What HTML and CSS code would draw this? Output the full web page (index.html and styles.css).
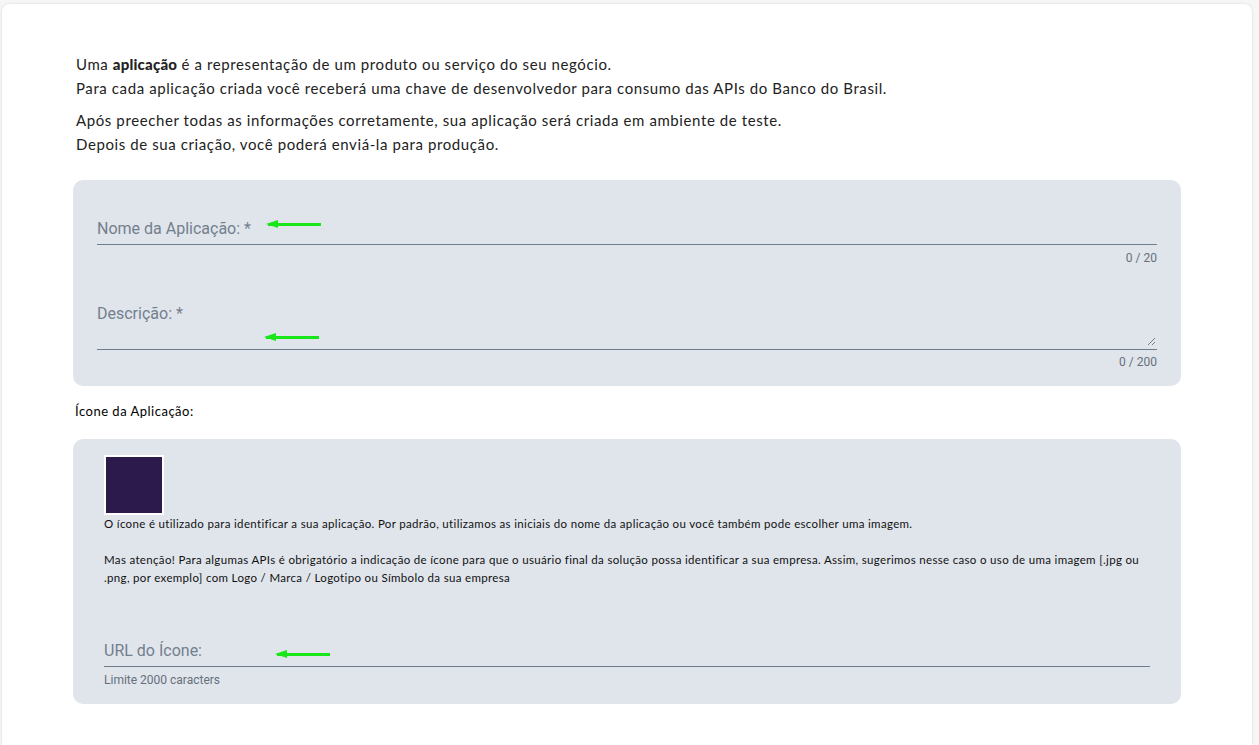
FILE: index.html
```html
<!DOCTYPE html>
<html lang="pt-BR">
<head>
    <meta charset="UTF-8">
    <meta name="viewport" content="width=device-width, initial-scale=1.0">
    <title>Nova Aplicação</title>
    <link rel="stylesheet" href="styles.css">
</head>
<body>
    <div class="card">
        <div class="intro">
            <p>Uma <strong>aplicação</strong> é a representação de um produto ou serviço do seu negócio.<br>
            Para cada aplicação criada você receberá uma chave de desenvolvedor para consumo das APIs do Banco do Brasil.</p>
            <p>Após preecher todas as informações corretamente, sua aplicação será criada em ambiente de teste.<br>
            Depois de sua criação, você poderá enviá-la para produção.</p>
        </div>

        <div class="panel panel-fields">
            <div class="field field-name">
                <div class="field-line">
                    <span class="field-label">Nome da Aplicação: *</span>
                    <span class="arrow arrow-name"></span>
                </div>
                <div class="field-hint right">0 / 20</div>
            </div>
            <div class="field field-desc">
                <div class="field-line textarea">
                    <span class="field-label">Descrição: *</span>
                    <span class="arrow arrow-desc"></span>
                    <svg class="grip" width="9" height="9" viewBox="0 0 9 9">
                        <path d="M8 1 L1 8 M8 5 L5 8" stroke="#7a7a7a" stroke-width="1"/>
                    </svg>
                </div>
                <div class="field-hint right">0 / 200</div>
            </div>
        </div>

        <div class="section-title">Ícone da Aplicação:</div>

        <div class="panel panel-icon">
            <div class="app-icon"></div>
            <p class="icon-text">O ícone é utilizado para identificar a sua aplicação. Por padrão, utilizamos as iniciais do nome da aplicação ou você também pode escolher uma imagem.<br><br>Mas atenção! Para algumas APIs é obrigatório a indicação de ícone para que o usuário final da solução possa identificar a sua empresa. Assim, sugerimos nesse caso o uso de uma imagem [.jpg ou .png, por exemplo] com Logo / Marca / Logotipo ou Símbolo da sua empresa</p>
            <div class="field field-url">
                <div class="field-line">
                    <span class="field-label">URL do Ícone:</span>
                    <span class="arrow arrow-url"></span>
                </div>
                <div class="field-hint">Limite 2000 caracters</div>
            </div>
        </div>
    </div>
</body>
</html>
```

FILE: styles.css
```css
body {
    margin: 0;
    background-color: #f6f6f6;
    font-family: Lato, "Open Sans", sans-serif;
    color: #1b1b1b;
}

.card {
    margin: 4px 7px 0 2px;
    min-height: 741px;
    box-sizing: border-box;
    background-color: #fff;
    border-radius: 8px 8px 0 0;
    box-shadow: 0 0 3px rgba(0, 0, 0, 0.12);
    padding: 48px 71px 30px 71px;
}

.intro {
    padding-left: 3px;
    font-size: 15px;
    line-height: 24px;
    letter-spacing: 0.6px;
    color: #222;
}

.intro p {
    margin: 0 0 8px;
}

.intro strong {
    font-weight: 900;
    letter-spacing: 0.2px;
}

.panel {
    background-color: #e0e5ec;
    border-radius: 10px;
}

.panel-fields {
    margin-top: 24px;
    padding: 29px 24px 16px 24px;
}

.field-line {
    position: relative;
    height: 36px;
    box-sizing: border-box;
    display: flex;
    align-items: flex-end;
    padding-bottom: 5px;
    border-bottom: 1px solid #6f7c8b;
}

.field-label {
    font-family: Roboto, sans-serif;
    font-size: 16px;
    line-height: 20px;
    color: #737f8d;
}

.field-hint {
    margin-top: 4px;
    font-family: Roboto, sans-serif;
    font-size: 12px;
    line-height: 16px;
    color: #666f7a;
}

.field-hint.right {
    text-align: right;
}

.field-name .field-hint {
    margin-top: 5px;
}

.field-desc {
    margin-top: 18px;
}

.field-line.textarea {
    height: 66px;
    align-items: flex-start;
    padding-top: 20px;
}

.grip {
    position: absolute;
    right: 1px;
    bottom: 3px;
}

/* green annotation arrows */
.arrow {
    position: absolute;
    width: 53px;
    height: 3px;
    background-color: #19e619;
}

.arrow::before {
    content: "";
    position: absolute;
    left: -2px;
    top: -3px;
    border-right: 12px solid #19e619;
    border-top: 4.5px solid transparent;
    border-bottom: 4.5px solid transparent;
}

.arrow-name {
    left: 171px;
    top: 14px;
}

.arrow-desc {
    left: 169px;
    top: 52px;
}

.arrow-url {
    left: 173px;
    top: 22px;
}

.section-title {
    margin: 15px 0 18px 2px;
    font-size: 13px;
    line-height: 20px;
    letter-spacing: 0.5px;
    color: #000;
}

.panel-icon {
    padding: 16px 31px 16px 31px;
}

.app-icon {
    width: 56px;
    height: 56px;
    background-color: #2c1a4c;
    border: 2px solid #fff;
}

.icon-text {
    margin: 0;
    font-size: 11.5px;
    line-height: 18px;
    letter-spacing: 0.33px;
    color: #111;
}

.field-url {
    margin-top: 44px;
}

.field-url .field-hint {
    margin-top: 5px;
}
```
